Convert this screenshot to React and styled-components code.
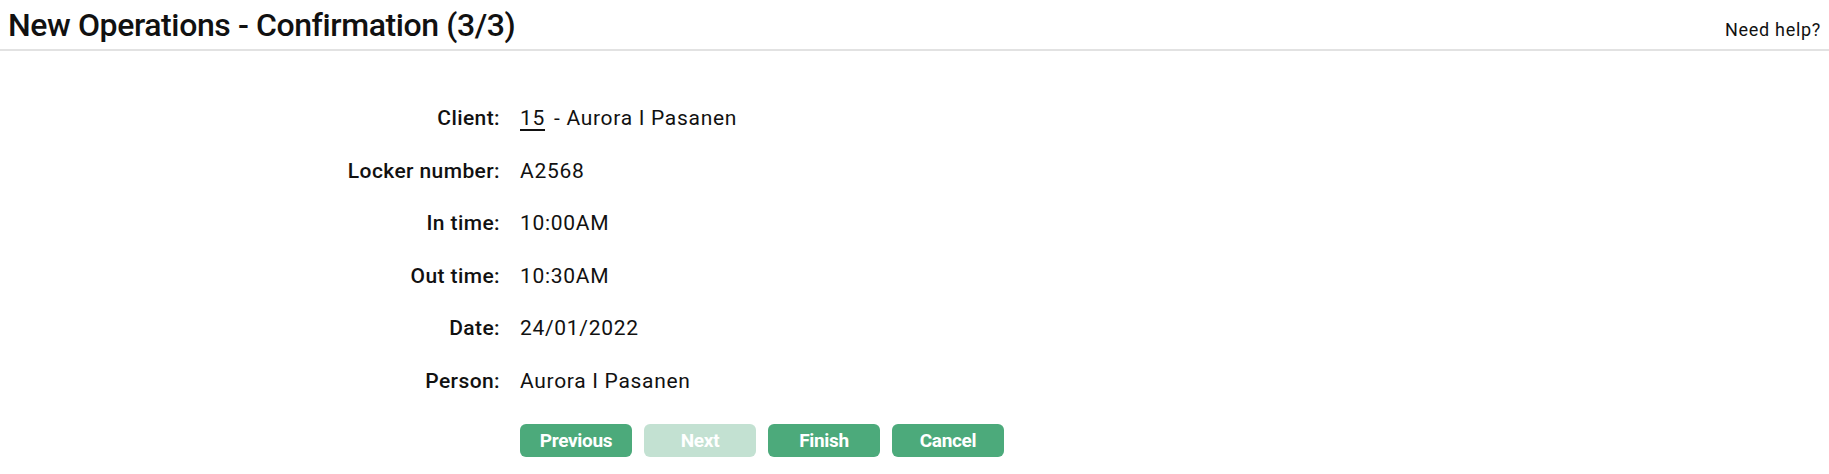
import styled, { createGlobalStyle } from 'styled-components';

const GlobalStyle = createGlobalStyle`
  body {
    margin: 0;
    background: #fff;
    color: #111;
    font-family: 'Roboto', 'Liberation Sans', sans-serif;
  }
`;

const Header = styled.header`
  align-items: baseline;
  border-bottom: 2px solid #e2e2e2;
  display: flex;
  height: 51px;
  justify-content: space-between;
  padding: 0 8px;
  box-sizing: border-box;
`;

const Title = styled.h1`
  font-size: 32px;
  font-weight: 500;
  letter-spacing: -0.4px;
  line-height: 51px;
  margin: 0;
`;

const HelpLink = styled.a`
  color: #111;
  font-size: 18px;
  letter-spacing: 0.7px;
  text-decoration: none;
`;

const Details = styled.div`
  align-items: center;
  column-gap: 20px;
  display: grid;
  grid-template-columns: 500px 1fr;
  grid-auto-rows: 52.5px;
  margin-top: 41px;
`;

const Label = styled.div`
  font-size: 21px;
  font-weight: 500;
  letter-spacing: 0.4px;
  text-align: right;
`;

const Value = styled.div`
  font-size: 21px;
  letter-spacing: 0.7px;
`;

const ClientLink = styled.a`
  color: #111;
  margin-right: 9px;
  text-decoration: underline;
  text-underline-offset: 4px;
`;

const Actions = styled.div`
  display: flex;
  gap: 12px;
  margin: 17px 0 0 520px;
`;

const Button = styled.button`
  background: ${p => p.disabled ? '#c3e1d2' : '#4caa7b'};
  border: 0;
  border-radius: 6px;
  color: #fff;
  font-family: 'Roboto', 'Liberation Sans', sans-serif;
  font-size: 19px;
  font-weight: 700;
  height: 33px;
  letter-spacing: -0.3px;
  padding: 0;
  width: 112px;
`;

const rows = [
  ['Locker number:', 'A2568'],
  ['In time:', '10:00AM'],
  ['Out time:', '10:30AM'],
  ['Date:', '24/01/2022'],
  ['Person:', 'Aurora I Pasanen'],
];

export default function App() {
  return (
    <>
      <GlobalStyle />
      <Header>
        <Title>New Operations - Confirmation (3/3)</Title>
        <HelpLink href="#">Need help?</HelpLink>
      </Header>
      <Details>
        <Label>Client:</Label>
        <Value><ClientLink href="#">15</ClientLink>- Aurora I Pasanen</Value>
        {rows.map(([label, value]) => (
          <>
            <Label key={label}>{label}</Label>
            <Value key={label + 'v'}>{value}</Value>
          </>
        ))}
      </Details>
      <Actions>
        <Button>Previous</Button>
        <Button disabled>Next</Button>
        <Button>Finish</Button>
        <Button>Cancel</Button>
      </Actions>
    </>
  );
}
